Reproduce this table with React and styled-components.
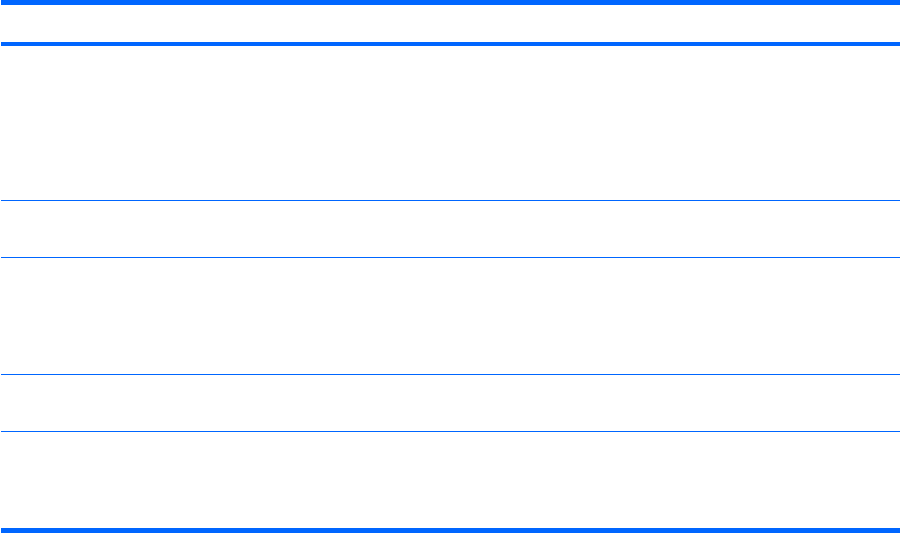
import React from "react";
import styled, { createGlobalStyle } from "styled-components";

const Global = createGlobalStyle`
  html, body { margin: 0; padding: 0; background: #ffffff; }
  body { font-family: "Liberation Sans", Arial, sans-serif; }
`;

const Table = styled.div`
  width: 899px;
  margin-left: 1px;
  border-top: 5px solid #0066ff;
  border-bottom: 5px solid #0066ff;
  display: grid;
  grid-template-columns: 449px 450px;
`;

const Cell = styled.div`
  height: ${(p) => p.$h}px;
  border-bottom: ${(p) => p.$rule}px solid #0066ff;
  box-sizing: content-box;
  font-size: 13px;
  color: #000;
`;

const rows = [
  { h: 37, rule: 4 },
  { h: 154, rule: 1 },
  { h: 56, rule: 1 },
  { h: 116, rule: 1 },
  { h: 56, rule: 1 },
  { h: 96, rule: 0 },
];

export default function App() {
  return (
    <>
      <Global />
      <Table>
        {rows.map((r, i) => (
          <React.Fragment key={i}>
            <Cell $h={r.h} $rule={r.rule} />
            <Cell $h={r.h} $rule={r.rule} />
          </React.Fragment>
        ))}
      </Table>
    </>
  );
}
